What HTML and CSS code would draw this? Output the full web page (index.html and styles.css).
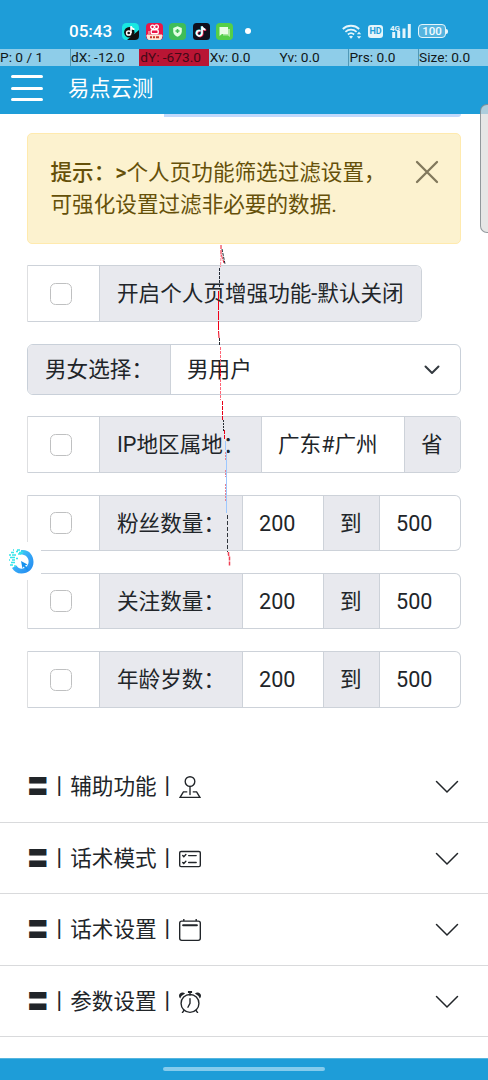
FILE: index.html
```html
<!DOCTYPE html>
<html lang="zh-CN">
<head>
<meta charset="utf-8">
<meta name="viewport" content="width=device-width, initial-scale=1">
<title>易点云测</title>
<link rel="stylesheet" href="styles.css">
</head>
<body>
<div class="screen">
  <header class="header">
    <div class="status">
      <span class="clock">05:43</span>
      <div class="apps">
        <svg width="17" height="17" viewBox="0 0 17 17"><rect width="17" height="17" rx="4.5" fill="#19e8e2"/><path d="M17 7v6a4 4 0 0 1-4 4H5z" fill="#111"/><circle cx="7.3" cy="9.3" r="5.2" fill="#111"/><circle cx="6.7" cy="10" r="2.1" fill="none" stroke="#fff" stroke-width="1.5"/><path d="M9 10V3.3c.5 2 1.5 3 3.500 3" fill="none" stroke="#fff" stroke-width="1.6"/></svg>
        <svg width="17" height="17" viewBox="0 0 17 17"><rect width="17" height="17" rx="4" fill="#e91748"/><circle cx="6.500" cy="4" r="1.800" fill="none" stroke="#fff" stroke-width="1.3"/><circle cx="10.500" cy="3.700" r="1.900" fill="none" stroke="#fff" stroke-width="1.300"/><rect x="5.200" y="6.800" width="7" height="4" rx="1.300" fill="none" stroke="#fff" stroke-width="1.400"/><path d="M3 8v3M1 12h15v1a4 4 0 0 1-4 4H5a4 4 0 0 1-4-4z" fill="#fbe9d8" stroke="#fbe9d8"/><path d="M4 14.300h2m1 0h2m1 0h3" stroke="#c9382b" stroke-width="2"/></svg>
        <svg width="17" height="17" viewBox="0 0 17 17"><rect width="17" height="17" rx="4" fill="#3fbd58"/><path d="M8.500 3.300 12.800 5v3.500c0 2.500-2 4.300-4.300 5.300-2.300-1-4.300-2.800-4.300-5.300V5z" fill="#e2ffe3"/><path d="M8.500 6v4M6.500 8h4" stroke="#3fbd58" stroke-width="1.600"/></svg>
        <svg width="17" height="17" viewBox="0 0 17 17"><rect width="17" height="17" rx="3.500" fill="#10101d"/><g fill="none" stroke-width="1.700"><path d="M7.500 7.800a2.700 2.700 0 1 0 1.500 2.500V3.500c.4 1.900 1.500 2.900 3.500 3" stroke="#ff2855" transform="translate(.7 .6)"/><path d="M7.500 7.800a2.700 2.700 0 1 0 1.500 2.500V3.500c.4 1.900 1.500 2.900 3.500 3" stroke="#20e7e8" transform="translate(-.5 -.2)"/><path d="M7.500 7.800a2.700 2.700 0 1 0 1.500 2.500V3.500c.4 1.900 1.500 2.900 3.500 3" stroke="#fff"/></g></svg>
        <svg width="17" height="17" viewBox="0 0 17 17"><rect width="17" height="17" rx="4" fill="#55cf48"/><path d="M8 6h6v8l-2-1.500H7V10z" fill="#a9e8a0"/><path d="M3.500 4h8.500v7H6l-2.500 2z" fill="#eafde5"/></svg>
      </div>
      <span class="dot"></span>
      <div class="signals">
        <svg class="wifi" width="20" height="17" viewBox="0 0 20 17"><g fill="none" stroke="#e5f5fb" stroke-width="1.800"><path d="M.8 6a12 12 0 0 1 16.400 0M3.400 8.800a8.400 8.400 0 0 1 11.200 0M5.900 11.500a4.700 4.700 0 0 1 6.200 0"/></g><path d="m9 15.700-2-2.200q2-1.500 4 0z" fill="#e5f5fb"/><path d="m14.800 11.200 2.200-2.500 2.200 2.500zM14.800 13.200l2.200 2.500 2.200-2.500z" fill="#e5f5fb"/></svg>
        <span class="hd">HD</span>
        <svg class="cell" width="22" height="17" viewBox="0 0 22 17"><text x="0" y="7.500" class="net">4G</text><path d="M3.700 9v6M8.700 8v7M14 5.500V15M19.300 1v14" stroke="#e5f5fb" stroke-width="3"/></svg>
        <span class="battery">100</span>
      </div>
    </div>
    <div class="pointer">
      <span>P: 0 / 1</span><span>dX: -12.0</span><span class="hot">dY: -673.0</span><span class="plain">Xv: 0.0</span><span class="plain">Yv: 0.0</span><span>Prs: 0.0</span><span>Size: 0.0</span>
    </div>
    <div class="appbar">
      <div class="burger"><i></i><i></i><i></i></div>
      <h1>易点云测</h1>
    </div>
  </header>

  <main class="content">
    <div class="previous"></div>
    <div class="alert">
      <p><b>提示：&gt;</b>个人页功能筛选过滤设置，<br>可强化设置过滤非必要的数据.</p>
      <svg class="close" width="24" height="24" viewBox="0 0 24 24"><path d="m2 2 20 20M22 2 2 22" stroke="#81785c" stroke-width="2.300" stroke-linecap="round"/></svg>
    </div>
    <div class="row short"><div class="check"><i></i></div><div class="label grow">开启个人页增强功能-默认关闭</div></div>
    <div class="row select"><div class="label name">男女选择：</div><div class="field grow">男用户<svg width="16" height="10" viewBox="0 0 16 10"><path d="m1.500 1.500 6.500 6.500 6.500-6.500" fill="none" stroke="#343a40" stroke-width="2" stroke-linecap="round" stroke-linejoin="round"/></svg></div></div>
    <div class="row"><div class="check"><i></i></div><div class="label region">IP地区属地：</div><div class="field grow">广东#广州</div><div class="label unit">省</div></div>
    <div class="row"><div class="check"><i></i></div><div class="label name">粉丝数量：</div><div class="field from">200</div><div class="label unit">到</div><div class="field grow">500</div></div>
    <div class="row"><div class="check"><i></i></div><div class="label name">关注数量：</div><div class="field from">200</div><div class="label unit">到</div><div class="field grow">500</div></div>
    <div class="row"><div class="check"><i></i></div><div class="label name">年龄岁数：</div><div class="field from">200</div><div class="label unit">到</div><div class="field grow">500</div></div>
  </main>

  <section class="accordion">
    <div class="item"><span>〓丨辅助功能丨</span><svg class="icon" viewBox="0 0 16 16"><circle cx="8" cy="4" r="3.500" fill="none" stroke="#212529"/><path d="M8 7.500v6" stroke="#212529" stroke-linecap="round"/><path d="M6 11.500H3.200L.8 15.500h14.400l-2.400-4H10" fill="none" stroke="#212529"/></svg><svg class="chev" viewBox="0 0 24 14"><path d="m1.500 1.500 10.500 10.500L22.500 1.500"/></svg></div>
    <div class="item"><span>〓丨话术模式丨</span><svg class="icon" viewBox="0 0 16 16"><rect x=".5" y="2.500" width="15" height="11" rx="1" fill="none" stroke="#212529"/><path d="M7 5.500h5.500M7 10.500h5.500M2.700 5.500l.8.800L5 4.700M2.700 10.500l.8.800L5 9.700" fill="none" stroke="#212529" stroke-linecap="round"/></svg><svg class="chev" viewBox="0 0 24 14"><path d="m1.500 1.500 10.500 10.500L22.500 1.500"/></svg></div>
    <div class="item"><span>〓丨话术设置丨</span><svg class="icon" viewBox="0 0 16 16"><rect x=".5" y="1.500" width="15" height="14" rx="1.500" fill="none" stroke="#212529"/><path d="M3.500 0v1.500M12.500 0v1.500" stroke="#212529"/><path d="M3 4.500h10" stroke="#212529" stroke-width="1.500" stroke-linecap="round"/></svg><svg class="chev" viewBox="0 0 24 14"><path d="m1.500 1.500 10.500 10.500L22.500 1.500"/></svg></div>
    <div class="item"><span>〓丨参数设置丨</span><svg class="icon" viewBox="0 0 16 16"><circle cx="8" cy="9" r="6.500" fill="none" stroke="#212529"/><path d="M8 5.500V9l-1.500 2.800M8 1v2M3.700 14l-1.200 1.700M12.300 14l1.200 1.700" fill="none" stroke="#212529" stroke-linecap="round"/><path d="M6.500 0h3v1.500h-3zM.86 5.387A2.500 2.500 0 1 1 4.387 1.860 8.040 8.040 0 0 0 .86 5.387M11.613 1.860a2.500 2.500 0 1 1 3.527 3.527 8.040 8.040 0 0 0-3.527-3.527" fill="#212529"/></svg><svg class="chev" viewBox="0 0 24 14"><path d="m1.500 1.500 10.500 10.500L22.500 1.500"/></svg></div>
  </section>
  <footer class="navbar"><i></i></footer>

  <div class="handle"></div>
  <div class="bubble">
    <svg width="40" height="38" viewBox="0 0 40 38"><defs><linearGradient id="g" x1="0" y1="0" x2="1" y2="1"><stop offset="0" stop-color="#3ee9ee"/><stop offset=".5" stop-color="#35a8f7"/><stop offset="1" stop-color="#2186ee"/></linearGradient></defs><path d="M20 8c8-1 12.500 5 12.500 12 0 7-5.500 11.500-12 11.500-4.500 0-7.500-2-9.500-5.500l4.500-2.500c2 3.500 6 4 9 2 4-3 4-8 1-11-1.500-1.500-3.500-2-6-2z" fill="url(#g)"/><path d="m20 19 6.500 3.500-2.500 1 3.500 4-1.500 1-3.500-4-1 2z" fill="#1591ed"/><g fill="none" stroke="#35e5ea" stroke-width="1.300"><path d="M10 10.500h3m2-1h2m1 1h4M8 13h2m1 0h4m2-1h3M9 15.500h5m1 1h2M8 18h1m2 0h3M10 20.500h4M9 23h3m1 1h2M12 8h1m3 0h3"/></g></svg>
  </div>
  <svg class="trace" width="20" height="326" viewBox="215 243 20 326" fill="none" stroke-width="1">
    <path d="M221 245v9l3 9" stroke="#e32135" stroke-dasharray="4 1"/><path d="M222 249l3 15M219.500 268v21" stroke="#222b36" stroke-dasharray="3 1"/><path d="M221.500 246l-1 21" stroke="#ff8190" stroke-dasharray="3 1"/>
    <path d="M218.500 291v39l.5 8" stroke="#f00018" stroke-dasharray="9 1"/><path d="M219.500 338v8" stroke="#252a30" stroke-dasharray="3 1"/><path d="M220.500 347v53" stroke="#ff6577" stroke-dasharray="3 1"/><path d="M220.500 369v7M222.500 401v20M224.500 430v10" stroke="#e80018" stroke-dasharray="4 1"/>
    <path d="M223.500 420v12" stroke="#272c32" stroke-dasharray="2 1"/><path d="M225.500 441v9M226.500 450v63" stroke="#9dc8ff"/><path d="M225.500 452v9M225.500 470v7M225.500 484v17" stroke="#e78391" stroke-dasharray="2 1"/><path d="M227.500 515v37" stroke="#30353c" stroke-dasharray="4 2"/><path d="M228.500 552v3l1 1v10" stroke="#ef4055" stroke-width="1.500" stroke-dasharray="4 1"/>
  </svg>
</div>
</body>
</html>
```
FILE: styles.css
```css
* { box-sizing: border-box; }
body { margin: 0; background: #fff; color: #212529; font: 400 21.6px/32.4px Roboto, "Noto Sans CJK SC", sans-serif; }
.screen { position: relative; width: 488px; height: 1080px; overflow: hidden; display: flex; flex-direction: column; }
.header { height: 114px; flex: none; background: #1e9dd8; color: #fff; }
.status { height: 49px; padding: 13px 42px 0 69px; display: flex; align-items: center; }
.clock { width: 53px; font-size: 17px; line-height: 20px; font-weight: 500; }
.apps { display: flex; gap: 6.500px; }
.dot { width: 6px; height: 6px; margin-left: 12px; border-radius: 50%; background: #fff; }
.signals { display: flex; align-items: center; margin-left: auto; }
.hd { width: 15px; height: 13px; margin-left: 6px; border-radius: 3px; background: #e5f5fb; color: #1e9dd8; font-size: 9px; font-weight: 700; line-height: 13px; text-align: center; }
.cell { margin-left: 7px; }
.net { font: 700 8px Roboto, sans-serif; fill: #e5f5fb; }
.battery { position: relative; width: 28px; height: 14px; margin-left: 6px; border: 1px solid #e5f5fb; border-radius: 4px; background: #55b4df; color: #f2fbff; font-size: 11.500px; font-weight: 500; line-height: 13px; text-align: center; }
.battery::after { content: ""; position: absolute; left: 27px; top: 3.500px; width: 2px; height: 5px; border-radius: 0 2px 2px 0; background: #e5f5fb; }
.pointer { height: 17px; display: grid; grid-template-columns: repeat(6, 69.600px) 1fr; background: #8ecde9; color: #101719; font-size: 13.700px; line-height: 17px; white-space: nowrap; }
.pointer span { padding-left: .5px; border-left: 1px solid #5099b8; }
.pointer .plain { border-color: transparent; padding-left: 0; }
.pointer span:first-child { padding-left: 0; border-left: 0; }
.pointer .hot { background: #b91534; border-color: #b91534; color: #430917; padding-left: 0; }
.appbar { height: 48px; padding: 0 11px; display: flex; align-items: center; gap: 25px; }
.burger { width: 32px; height: 26px; margin-top: -4px; display: flex; flex-direction: column; justify-content: space-between; }
.burger i { height: 3px; border-radius: 2px; background: #fff; }
h1 { margin: -3px 0 0; font-size: 21.300px; line-height: 32px; font-weight: 400; }
.content { height: 637px; flex: none; padding: 0 27px; display: flex; flex-direction: column; align-items: stretch; gap: 21.800px; }
.previous { width: 297px; height: 3px; margin-left: auto; margin-bottom: -5.600px; border-radius: 0 0 8px; background: #c2d9fc; flex: none; }
.alert { height: 110.300px; flex: none; padding: 22.500px 21px 0 22.500px; display: flex; justify-content: space-between; border: 1px solid #ffeaae; border-radius: 5px; background: #fcf2cf; color: #655009; }
.alert p { margin: 0; white-space: nowrap; }
.alert b { font-weight: 500; }
.close { flex: none; margin: 3px 0 0 -12px; }
.row { height: 56.500px; flex: none; display: flex; border: 1px solid #cdd2d9; border-left-color: #dedfe1; border-radius: 0 6px 6px 0; overflow: hidden; }
.row > * { display: flex; align-items: center; white-space: nowrap; }
.row > * + * { border-left: 1px solid #cdd2d9; }
.short { width: 395px; }
.select { height: 51px; border-radius: 6px; border-color: #c9d0d9; }
.check { width: 71px; padding-left: 22px; }
.check i { width: 22px; height: 22px; border: 1px solid #bfc0c1; border-radius: 5.500px; }
.label, .field { padding-top: 2px; }
.label { background: #e8e9ee; padding-left: 17px; }
.name { width: 143px; }
.region { width: 162px; }
.unit { width: 56px; padding-left: 16px; }
.from { width: 81px; }
.field { padding-left: 16px; }
.select .label { width: 142px; }
.select svg { margin: 0 20px 0 auto; }
.grow { flex: 1; }
.accordion { height: 307px; flex: none; }
.item { height: 71.500px; padding: 2px 29px 0 27px; display: flex; align-items: center; border-bottom: 1px solid #d9dadc; white-space: nowrap; }
.icon { width: 22px; height: 22px; margin-left: 1px; }
.chev { width: 24px; height: 14px; margin-left: auto; fill: none; stroke: #212529; stroke-width: 1.500; stroke-linecap: round; }
.navbar { height: 22px; flex: none; padding-top: 8px; background: #1e9dd8; border-top: 1px solid #55b5df; }
.navbar i { display: block; width: 162px; height: 4px; margin: 0 auto; border-radius: 2px; background: #85cbec; }
.handle { position: absolute; left: 480px; top: 104px; width: 20px; height: 129px; border: 1px solid rgba(110,120,125,.7); border-radius: 7px; background: rgba(222,222,222,.75); }
.bubble { position: absolute; left: 1px; top: 542px; width: 40px; height: 38px; background: #fff; }
.bubble svg { display: block; }
.trace { position: absolute; left: 215px; top: 243px; }
```
